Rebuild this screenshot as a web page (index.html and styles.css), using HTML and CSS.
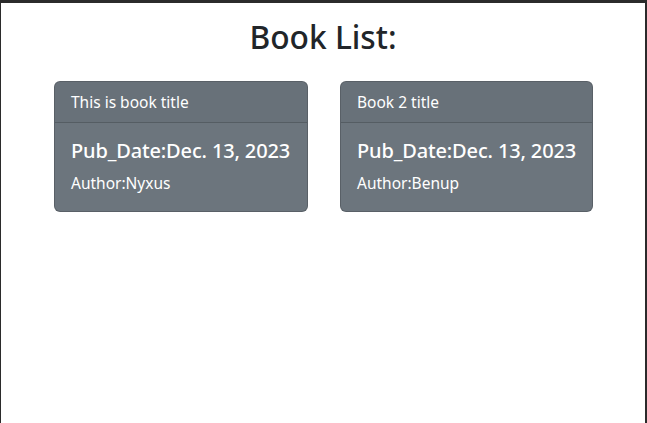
FILE: index.html
```html
<!DOCTYPE html>
<html lang="en">
<head>
<meta charset="utf-8">
<title>Book List</title>
<link rel="stylesheet" href="styles.css">
</head>
<body>
<div class="frame">
  <h1 class="page-title">Book List:</h1>
  <div class="book-row">
    <div class="card">
      <div class="card-header">This is book title</div>
      <div class="card-body">
        <h5 class="card-title">Pub_Date:Dec. 13, 2023</h5>
        <p class="card-text">Author:Nyxus</p>
      </div>
    </div>
    <div class="card">
      <div class="card-header">Book 2 title</div>
      <div class="card-body">
        <h5 class="card-title">Pub_Date:Dec. 13, 2023</h5>
        <p class="card-text">Author:Benup</p>
      </div>
    </div>
  </div>
</div>
</body>
</html>
```
FILE: styles.css
```css
* { box-sizing: border-box; }
html, body { margin: 0; padding: 0; }
body {
  font-family: "Noto Sans", "Open Sans", sans-serif;
  color: #212529;
  background: #fff;
}
.frame {
  width: 647px;
  height: 423px;
  border-top: 3px solid #2b2b2b;
  border-left: 1px solid #2b2b2b;
  border-right: 2px solid #2b2b2b;
  background: #fff;
  overflow: hidden;
}
.page-title {
  margin: 15px 0 25px;
  font-size: 31.7px;
  font-weight: 500;
  line-height: 1.2;
  text-align: center;
}
.book-row {
  display: flex;
  gap: 32px;
  padding-left: 53px;
}
.card {
  width: 254px;
  background: #6c757d;
  color: #fff;
  border: 1px solid rgba(0,0,0,0.175);
  border-radius: 6px;
  overflow: hidden;
}
.card:nth-child(2) { width: 253px; }
.card-header {
  padding: 8px 16px;
  font-size: 15.5px;
  line-height: 24px;
  background: rgba(0,0,0,0.03);
  border-bottom: 1px solid rgba(0,0,0,0.175);
}
.card-body { padding: 16px; }
.card-title {
  margin: 0 0 8px;
  font-size: 20px;
  font-weight: 500;
  line-height: 24px;
  white-space: nowrap;
  letter-spacing: -0.15px;
}
.card-text {
  margin: 0;
  font-size: 15.5px;
  line-height: 24px;
}
```
